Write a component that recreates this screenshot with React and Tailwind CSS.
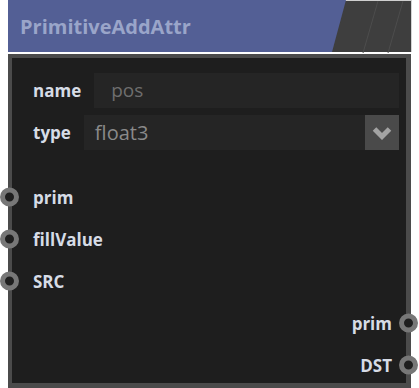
import React from "react";

const font = { fontFamily: '"Open Sans", "Noto Sans", sans-serif' };

function Socket({ side }) {
  return (
    <div
      className={
        "absolute top-1/2 -translate-y-1/2 w-[19px] h-[19px] rounded-full border-[5px] border-[#777777] bg-[#1f1f1f] " +
        (side === "left" ? "-left-[12px]" : "-right-[12px]")
      }
    />
  );
}

function InRow({ label }) {
  return (
    <div className="relative h-[42px] flex items-center pl-[21px]">
      <Socket side="left" />
      <span className="text-[17px] font-bold text-[#d6dce6] leading-none">{label}</span>
    </div>
  );
}

function OutRow({ label }) {
  return (
    <div className="relative h-[42px] flex items-center justify-end pr-[14px]">
      <span className="text-[17px] font-bold text-[#d6dce6] leading-none">{label}</span>
      <Socket side="right" />
    </div>
  );
}

export default function App() {
  return (
    <div className="w-[419px] h-[388px] bg-white overflow-hidden" style={font}>
      {/* header */}
      <div className="ml-[8px] w-[404px] h-[52px] flex bg-[#3e3e3e] border-r border-[#d4d4d4]">
        <div
          className="w-[338px] h-full bg-[#535f95] flex items-center pl-[12px] pt-[1px]"
          style={{ clipPath: "polygon(0 0, 100% 0, calc(100% - 14px) 100%, 0 100%)" }}
        >
          <span className="text-[20px] font-bold text-[#9aa5c9] leading-none">PrimitiveAddAttr</span>
        </div>
        <div className="flex-1 h-full border-t border-[#cfcfcf] -ml-[2px]">
          <svg width="67" height="52" viewBox="0 0 67 52" className="block">
            <line x1="34" y1="0" x2="19" y2="52" stroke="#4d4d4d" strokeWidth="1" />
            <line x1="59" y1="0" x2="44" y2="52" stroke="#4d4d4d" strokeWidth="1" />
          </svg>
        </div>
      </div>

      {/* body */}
      <div className="mt-[2px] ml-[8px] w-[403px] h-[334px] border-t-4 border-l-4 border-r-[5px] border-b-[5px] border-[#4b4b4b] bg-[#1e1e1e]">
        <div className="flex flex-col">
          <div className="pt-[15px] pl-[21px] pr-[7px] flex flex-col gap-[7px]">
            <div className="flex items-center gap-[13px] h-[35px]">
              <span className="text-[17px] font-bold text-[#d6dce6] leading-none">name</span>
              <div className="flex-1 h-[35px] bg-[#252525] flex items-center pl-[17px]">
                <span className="text-[19px] text-[#6e6e6e] leading-none">pos</span>
              </div>
            </div>
            <div className="flex items-center gap-[13px] h-[35px]">
              <span className="text-[17px] font-bold text-[#d6dce6] leading-none">type</span>
              <div className="flex-1 h-[35px] bg-[#252525] flex items-center pl-[11px]">
                <span className="flex-1 text-[20px] text-[#8a8a8a] leading-none">float3</span>
                <div className="w-[34px] h-[35px] bg-[#4a4a4a] flex items-center justify-center">
                  <svg width="20" height="14" viewBox="0 0 20 14">
                    <polyline points="2.5,3 10,10.5 17.5,3" fill="none" stroke="#a3a3a3" strokeWidth="5" />
                  </svg>
                </div>
              </div>
            </div>
          </div>
          <div className="mt-[26px] flex flex-col">
            <InRow label="prim" />
            <InRow label="fillValue" />
            <InRow label="SRC" />
            <OutRow label="prim" />
            <OutRow label="DST" />
          </div>
        </div>
      </div>
    </div>
  );
}
